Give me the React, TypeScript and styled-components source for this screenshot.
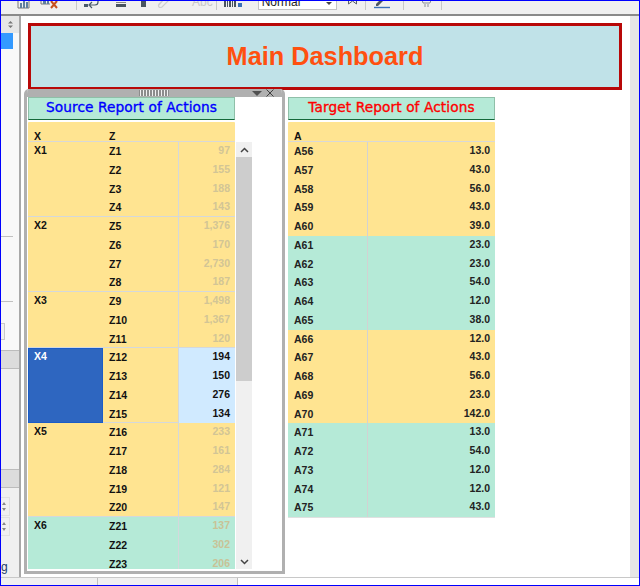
import * as React from 'react'
import styled, { createGlobalStyle } from 'styled-components'

interface SourceGroup {
  name: string;
  items: [string, string][];
  tint?: 'yellow' | 'teal';
  selected?: boolean;
}

const sourceGroups: SourceGroup[] = [
  { name: 'X1', items: [['Z1', '97'], ['Z2', '155'], ['Z3', '188'], ['Z4', '143']] },
  { name: 'X2', items: [['Z5', '1,376'], ['Z6', '170'], ['Z7', '2,730'], ['Z8', '187']] },
  { name: 'X3', items: [['Z9', '1,498'], ['Z10', '1,367'], ['Z11', '120']] },
  { name: 'X4', selected: true, items: [['Z12', '194'], ['Z13', '150'], ['Z14', '276'], ['Z15', '134']] },
  { name: 'X5', items: [['Z16', '233'], ['Z17', '161'], ['Z18', '284'], ['Z19', '121'], ['Z20', '147']] },
  { name: 'X6', tint: 'teal', items: [['Z21', '137'], ['Z22', '302'], ['Z23', '206']] },
]

const targetGroups: { tint: 'yellow' | 'teal'; rows: [string, string][] }[] = [
  { tint: 'yellow', rows: [['A56', '13.0'], ['A57', '43.0'], ['A58', '56.0'], ['A59', '43.0'], ['A60', '39.0']] },
  { tint: 'teal', rows: [['A61', '23.0'], ['A62', '23.0'], ['A63', '54.0'], ['A64', '12.0'], ['A65', '38.0']] },
  { tint: 'yellow', rows: [['A66', '12.0'], ['A67', '43.0'], ['A68', '56.0'], ['A69', '23.0'], ['A70', '142.0']] },
  { tint: 'teal', rows: [['A71', '13.0'], ['A72', '54.0'], ['A73', '12.0'], ['A74', '12.0'], ['A75', '43.0']] },
]

const YELLOW = '#ffe491'
const TEAL = '#b5ead7'
const tintColor = (tint?: 'yellow' | 'teal') => (tint === 'teal' ? TEAL : YELLOW)

const GlobalStyle = createGlobalStyle`
  html, body { margin: 0; padding: 0; background: #fff; }
  body { font-family: 'Liberation Sans', Arial, sans-serif; }
`

const Frame = styled.div`
  width: 640px;
  height: 586px;
  box-sizing: border-box;
  border: 1px solid #0000ff;
  display: flex;
  flex-direction: column;
  overflow: hidden;
  background: #fff;
`

const Toolbar = styled.div`
  height: 15px;
  flex: none;
  box-sizing: border-box;
  display: flex;
  align-items: flex-end;
  padding-bottom: 5px;
  background: #f0f0f0;
  border-bottom: 2px solid #8a8a8a;
  overflow: hidden;
`

const ToolSlot = styled.div<{ $gap: number }>`
  flex: none;
  margin-left: ${(props) => props.$gap}px;
  display: flex;
  align-items: flex-end;
`

const ToolSep = styled.div<{ $gap: number }>`
  flex: none;
  width: 1px;
  height: 10px;
  margin-left: ${(props) => props.$gap}px;
  margin-bottom: -1px;
  background: #c8c8c8;
`

const AbcLabel = styled.span`
  font-size: 12px;
  line-height: 13px;
  color: #c8c8c8;
`

const StyleSelect = styled.div`
  flex: none;
  width: 79px;
  height: 18px;
  margin-left: 16px;
  margin-bottom: -1px;
  box-sizing: border-box;
  padding: 0 4px 0 3px;
  display: flex;
  align-items: flex-end;
  justify-content: space-between;
  background: #fff;
  border: 1px solid #c4c4c4;
  font-size: 12px;
  line-height: 14px;
  color: #222;
`

const SelectCaret = styled.span`
  width: 0;
  height: 0;
  margin-bottom: 4px;
  border-left: 3px solid transparent;
  border-right: 3px solid transparent;
  border-top: 3px solid #444;
`

const Body = styled.div`
  flex: 1;
  display: flex;
  min-height: 0;
`

const SidePanel = styled.div`
  width: 18px;
  flex: none;
  display: flex;
  flex-direction: column;
  background: #f8f8f8;
  overflow: hidden;
`

const SideScroller = styled.div`
  height: 17px;
  flex: none;
  display: flex;
  align-items: center;
  justify-content: center;
  padding-left: 1px;
  background: #e6e6e6;
`

const SideSelected = styled.div`
  width: 12px;
  height: 16px;
  flex: none;
  background: #3399ff;
`

const SideRule = styled.div<{ $top: number }>`
  width: 12px;
  height: 1px;
  flex: none;
  margin-top: ${(props) => props.$top}px;
  background: #c0c0c0;
`

const SideBox = styled.div`
  width: 4px;
  height: 17px;
  flex: none;
  margin-top: 21px;
  box-sizing: border-box;
  background: #f0f0f0;
  border: 1px solid #c8c8c8;
  border-left: none;
`

const SideHeader = styled.div<{ $top: number }>`
  height: 19px;
  flex: none;
  margin-top: ${(props) => props.$top}px;
  box-sizing: border-box;
  background: #dcdcdc;
  border-top: 1px solid #bcbcbc;
  border-bottom: 1px solid #bcbcbc;
`

const SideFill = styled.div`
  flex: 1;
  display: flex;
  flex-direction: column;
  background: #f0f0f0;
`

const SideSpinner = styled.div<{ $top: number }>`
  width: 9px;
  height: 19px;
  flex: none;
  margin-top: ${(props) => props.$top}px;
  box-sizing: border-box;
  display: flex;
  flex-direction: column;
  align-items: flex-end;
  justify-content: center;
  gap: 3px;
  padding-right: 3px;
  border: 1px solid #e0e0e0;
  border-left: none;
`

const SpinUp = styled.span`
  width: 0;
  height: 0;
  border-left: 2px solid transparent;
  border-right: 2px solid transparent;
  border-bottom: 3px solid #888;
`

const SpinDown = styled.span`
  width: 0;
  height: 0;
  border-left: 2px solid transparent;
  border-right: 2px solid transparent;
  border-top: 3px solid #888;
`

const SideCaption = styled.div`
  margin-top: 24px;
  font-size: 12px;
  line-height: 14px;
  color: #1c3c6c;
`

const Canvas = styled.div`
  flex: 1;
  min-width: 0;
  box-sizing: border-box;
  padding: 7px 0 0 3px;
  background: #fff;
  border-left: 2px solid #a8a8a8;
`

const ScrollStrip = styled.div`
  width: 9px;
  flex: none;
  background: #e6e6e6;
`

const Banner = styled.div`
  height: 67px;
  margin: 0 8px 0 4px;
  box-sizing: border-box;
  display: flex;
  align-items: center;
  justify-content: center;
  background: #c0e2e8;
  border: 3px solid #b80808;
  font-size: 25.3px;
  font-weight: bold;
  color: #ff5010;
`

const Reports = styled.div`
  display: flex;
  align-items: flex-start;
  margin-top: -1px;
`

const FloatPanel = styled.div`
  width: 261px;
  height: 485px;
  flex: none;
  box-sizing: border-box;
  background: #fff;
  border: 3px solid #b0b0b0;
  border-top: none;
  border-radius: 5px 5px 0 0;
  padding-left: 1px;
  overflow: hidden;
`

const PanelBar = styled.div`
  height: 8px;
  margin-left: -1px;
  display: flex;
  align-items: center;
  background: #b0b0b0;
  padding-left: 112px;
`

const Grip = styled.div`
  width: 30px;
  height: 6px;
  background-color: #8c8c8c;
  background-image: radial-gradient(#f0f0f0 0.8px, transparent 0.9px);
  background-size: 3px 2px;
`

const PanelTriangle = styled.span`
  width: 0;
  height: 0;
  margin-left: 83px;
  border-left: 5px solid transparent;
  border-right: 5px solid transparent;
  border-top: 5px solid #505050;
`

const PanelClose = styled.svg`
  margin-left: 4px;
  width: 8px;
  height: 8px;
`

const ReportTitle = styled.div<{ $color: string }>`
  width: 207px;
  height: 23px;
  box-sizing: border-box;
  display: flex;
  align-items: center;
  justify-content: center;
  padding-bottom: 3px;
  background: ${TEAL};
  border: 1px solid #8fbfa8;
  border-bottom: 1px solid #14693a;
  font-family: 'DejaVu Sans', sans-serif;
  font-size: 13.7px;
  letter-spacing: 0.1px;
  -webkit-text-stroke: 0.35px ${(props) => props.$color};
  color: ${(props) => props.$color};
`

const HeadRow = styled.div`
  width: 207px;
  height: 20px;
  margin-top: 2px;
  box-sizing: border-box;
  display: flex;
  align-items: flex-end;
  background: ${YELLOW};
  border-bottom: 1px solid #d8d8d8;
  border-radius: 1px 1px 0 0;
`

const HeadCell = styled.div<{ $width: number }>`
  width: ${(props) => props.$width}px;
  padding-left: 6px;
  box-sizing: border-box;
  font-size: 10.5px;
  font-weight: bold;
  line-height: 10px;
  color: #111;
`

const SourceBody = styled.div`
  display: flex;
  height: 427px;
`

const SourceRows = styled.div`
  width: 207px;
  flex: none;
  overflow: hidden;
`

const Group = styled.div<{ $tint?: 'yellow' | 'teal' }>`
  display: grid;
  grid-template-columns: 75px 75px 57px;
  background: ${(props) => tintColor(props.$tint)};
  box-shadow: inset 0 -1px 0 #d4d8dc;
`

const GroupName = styled.div<{ $span: number; $selected?: boolean }>`
  grid-column: 1;
  grid-row: 1 / span ${(props) => props.$span};
  box-sizing: border-box;
  padding: ${(props) => (props.$selected ? '0 0 0 5px' : '1px 0 0 6px')};
  font-size: 10.5px;
  font-weight: bold;
  line-height: 14px;
  color: ${(props) => (props.$selected ? '#fff' : '#111')};
  background: ${(props) => (props.$selected ? '#2e66c0' : 'transparent')};
  border: ${(props) => (props.$selected ? '1px solid #1a5cc8' : 'none')};
`

const ItemCell = styled.div`
  grid-column: 2;
  height: 18.75px;
  box-sizing: border-box;
  padding: 2px 0 0 6px;
  font-size: 10.5px;
  font-weight: bold;
  line-height: 14px;
  color: #111;
`

const ValueCell = styled.div<{ $selected?: boolean; $tint?: 'yellow' | 'teal' }>`
  grid-column: 3;
  height: 18.75px;
  box-sizing: border-box;
  padding: 1px 5px 0 0;
  text-align: right;
  font-size: 10.5px;
  font-weight: bold;
  line-height: 14px;
  color: ${(props) => (props.$selected ? '#111' : props.$tint === 'teal' ? '#c9c296' : '#d2c596')};
  background: ${(props) => (props.$selected ? '#d0eaff' : 'transparent')};
  border-left: 1px solid #d4d8dc;
`

const Scrollbar = styled.div`
  width: 16px;
  flex: none;
  margin-left: 1px;
  display: flex;
  flex-direction: column;
  align-items: center;
  background: #f0f0f0;
`

const ScrollButton = styled.div<{ $end?: boolean }>`
  height: 15px;
  flex: none;
  display: flex;
  align-items: center;
  justify-content: center;
  margin-top: ${(props) => (props.$end ? 'auto' : '0')};
`

const ScrollThumb = styled.div`
  width: 100%;
  height: 224px;
  flex: none;
  background: #cdcdcd;
`

const TargetColumn = styled.div`
  width: 207px;
  flex: none;
  margin: 8px 0 0 3px;
`

const TargetRow = styled.div<{ $tint: 'yellow' | 'teal' }>`
  display: grid;
  grid-template-columns: 79px 128px;
  height: 18.75px;
  background: ${(props) => tintColor(props.$tint)};
`

const TargetName = styled.div`
  box-sizing: border-box;
  padding: 2px 0 0 6px;
  font-size: 10.5px;
  font-weight: bold;
  line-height: 14px;
  color: #222;
`

const TargetValue = styled.div`
  box-sizing: border-box;
  padding: 1px 5px 0 0;
  text-align: right;
  font-size: 10.5px;
  font-weight: bold;
  line-height: 14px;
  color: #222;
  border-left: 1px solid #d2d2d2;
`

const TargetEnd = styled.div`
  height: 1px;
  background: #e0e0e0;
`

const StatusBar = styled.div`
  height: 7px;
  flex: none;
  display: grid;
  grid-template-columns: 97px 140px 1fr;
  background: #f0f0f0;
  border-top: 1px solid #c8c8c8;
`

const StatusCell = styled.div<{ $blank?: boolean }>`
  background: ${(props) => (props.$blank ? '#fff' : '#f0f0f0')};
  border-right: ${(props) => (props.$blank ? 'none' : '1px solid #c0c0c0')};
`

const ChartIcon = () => (
  <svg width="13" height="14" viewBox="0 0 13 14">
    <path d="M1 5.5V13H12V5.5" fill="none" stroke="#777" />
    <path d="M3 13V8h2v5M6 13V6h2v7M9 13V7h2v6" fill="#5f7f9f" />
  </svg>
)

const ChartRemoveIcon = () => (
  <svg width="18" height="15" viewBox="0 0 18 15">
    <path d="M1 6V10H10" fill="none" stroke="#777" />
    <path d="M3 10V4h3v6zM7 10V3h2v7z" fill="#5f7f9f" />
    <path d="M11 7l6 7M17 7l-6 7" stroke="#c8501e" strokeWidth="2" fill="none" />
  </svg>
)

const WrapIcon = () => (
  <svg width="15" height="14" viewBox="0 0 15 14">
    <path d="M0 3h4v3H0zM0 9h4v3H0z" fill="#4a5a6a" />
    <path d="M14 2v5q0 3-3 3H6M8 7l-3 3 3 3" fill="none" stroke="#4a5a6a" strokeWidth="1.2" />
  </svg>
)

const LinesIcon = () => (
  <svg width="10" height="14" viewBox="0 0 10 14">
    <path d="M0 5h10M0 7.5h10" stroke="#888" />
    <path d="M0 9h10v3H0z" fill="#4a5560" />
  </svg>
)

const SquareIcon = () => (
  <svg width="7" height="14" viewBox="0 0 7 14">
    <path d="M1 2h5v2H1z" fill="#888" />
    <path d="M1 6h5v6H1z" fill="#4a5560" />
  </svg>
)

const ClipIcon = () => (
  <svg width="13" height="14" viewBox="0 0 13 14">
    <path d="M1 11l8-9q2-1 3 0t0 3l-7 7q-2 1-3 0t0-3l6-6" fill="none" stroke="#cfcfcf" strokeWidth="1.2" />
  </svg>
)

const BarcodeIcon = () => (
  <svg width="18" height="14" viewBox="0 0 18 14">
    <path d="M0 3h2v9H0zM3 3h1v9H3zM5 3h2v9H5zM8 3h1v9H8zM10 3h2v9h-2z" fill="#4a5560" />
    <path d="M14 8h4v4h-4z" fill="#3a70b8" />
  </svg>
)

const BookmarkIcon = () => (
  <svg width="9" height="14" viewBox="0 0 9 14">
    <path d="M0.5 1v8l4-3 4 3V1" fill="none" stroke="#5a6068" />
  </svg>
)

const PenIcon = () => (
  <svg width="16" height="14" viewBox="0 0 16 14">
    <path d="M2 9l7-7 2 2-7 7H2z" fill="#505860" />
    <path d="M0 12.5h16" stroke="#3a70b8" strokeWidth="1.4" />
  </svg>
)

const CartIcon = () => (
  <svg width="15" height="14" viewBox="0 0 15 14">
    <path d="M0 1h3l2 7h7l2-6H4" fill="none" stroke="#8a9098" />
    <path d="M7 9v3M10 9v3" stroke="#8a9098" />
  </svg>
)

const UpDownIcon = () => (
  <svg width="7" height="9" viewBox="0 0 7 9">
    <path d="M1 3.5L3.5 1 6 3.5zM1 5.5L3.5 8 6 5.5z" fill="#777" />
  </svg>
)

const Chevron = ({ up }: { up?: boolean }) => (
  <svg width="9" height="6" viewBox="0 0 9 6">
    <path d={up ? 'M1 5l3.5-3.5L8 5' : 'M1 1l3.5 3.5L8 1'} fill="none" stroke="#444" strokeWidth="1.5" />
  </svg>
)

const App: React.FunctionComponent = () => {
  return (
    <Frame>
      <GlobalStyle />
      <Toolbar>
        <ToolSlot $gap={16}><ChartIcon /></ToolSlot>
        <ToolSlot $gap={10}><ChartRemoveIcon /></ToolSlot>
        <ToolSep $gap={18} />
        <ToolSlot $gap={7}><WrapIcon /></ToolSlot>
        <ToolSlot $gap={17}><LinesIcon /></ToolSlot>
        <ToolSlot $gap={14}><SquareIcon /></ToolSlot>
        <ToolSlot $gap={10}><ClipIcon /></ToolSlot>
        <ToolSlot $gap={22}><AbcLabel>Abc</AbcLabel></ToolSlot>
        <ToolSep $gap={3} />
        <ToolSlot $gap={7}><BarcodeIcon /></ToolSlot>
        <StyleSelect>Normal<SelectCaret /></StyleSelect>
        <ToolSlot $gap={11}><BookmarkIcon /></ToolSlot>
        <ToolSep $gap={8} />
        <ToolSlot $gap={8}><PenIcon /></ToolSlot>
        <ToolSep $gap={13} />
        <ToolSlot $gap={14}><CartIcon /></ToolSlot>
        <ToolSep $gap={8} />
      </Toolbar>
      <Body>
        <SidePanel>
          <SideScroller><UpDownIcon /></SideScroller>
          <SideSelected />
          <SideRule $top={187} />
          <SideRule $top={64} />
          <SideBox />
          <SideHeader $top={10} />
          <SideFill>
            <SideHeader $top={100} />
            <SideSpinner $top={9}><SpinUp /><SpinDown /></SideSpinner>
            <SideSpinner $top={1}><SpinUp /><SpinDown /></SideSpinner>
            <SideCaption>g</SideCaption>
          </SideFill>
        </SidePanel>
        <Canvas>
          <Banner>Main Dashboard</Banner>
          <Reports>
            <FloatPanel>
              <PanelBar>
                <Grip />
                <PanelTriangle />
                <PanelClose viewBox="0 0 8 8">
                  <path d="M0.5 0.5l7 7M7.5 0.5l-7 7" stroke="#404040" strokeWidth="1" />
                </PanelClose>
              </PanelBar>
              <ReportTitle $color="#0000ff">Source Report of Actions</ReportTitle>
              <HeadRow>
                <HeadCell $width={75}>X</HeadCell>
                <HeadCell $width={75}>Z</HeadCell>
              </HeadRow>
              <SourceBody>
                <SourceRows>
                  {sourceGroups.map((group) => (
                    <Group key={group.name} $tint={group.tint}>
                      <GroupName $span={group.items.length} $selected={group.selected}>{group.name}</GroupName>
                      {group.items.map(([item, value]) => (
                        <React.Fragment key={item}>
                          <ItemCell>{item}</ItemCell>
                          <ValueCell $selected={group.selected} $tint={group.tint}>{value}</ValueCell>
                        </React.Fragment>
                      ))}
                    </Group>
                  ))}
                </SourceRows>
                <Scrollbar>
                  <ScrollButton><Chevron up /></ScrollButton>
                  <ScrollThumb />
                  <ScrollButton $end><Chevron /></ScrollButton>
                </Scrollbar>
              </SourceBody>
            </FloatPanel>
            <TargetColumn>
              <ReportTitle $color="#ff0000">Target Report of Actions</ReportTitle>
              <HeadRow>
                <HeadCell $width={79}>A</HeadCell>
              </HeadRow>
              {targetGroups.map((group) =>
                group.rows.map(([name, value]) => (
                  <TargetRow key={name} $tint={group.tint}>
                    <TargetName>{name}</TargetName>
                    <TargetValue>{value}</TargetValue>
                  </TargetRow>
                ))
              )}
              <TargetEnd />
            </TargetColumn>
          </Reports>
        </Canvas>
        <ScrollStrip />
      </Body>
      <StatusBar>
        <StatusCell />
        <StatusCell />
        <StatusCell $blank />
      </StatusBar>
    </Frame>
  )
}

export default App
